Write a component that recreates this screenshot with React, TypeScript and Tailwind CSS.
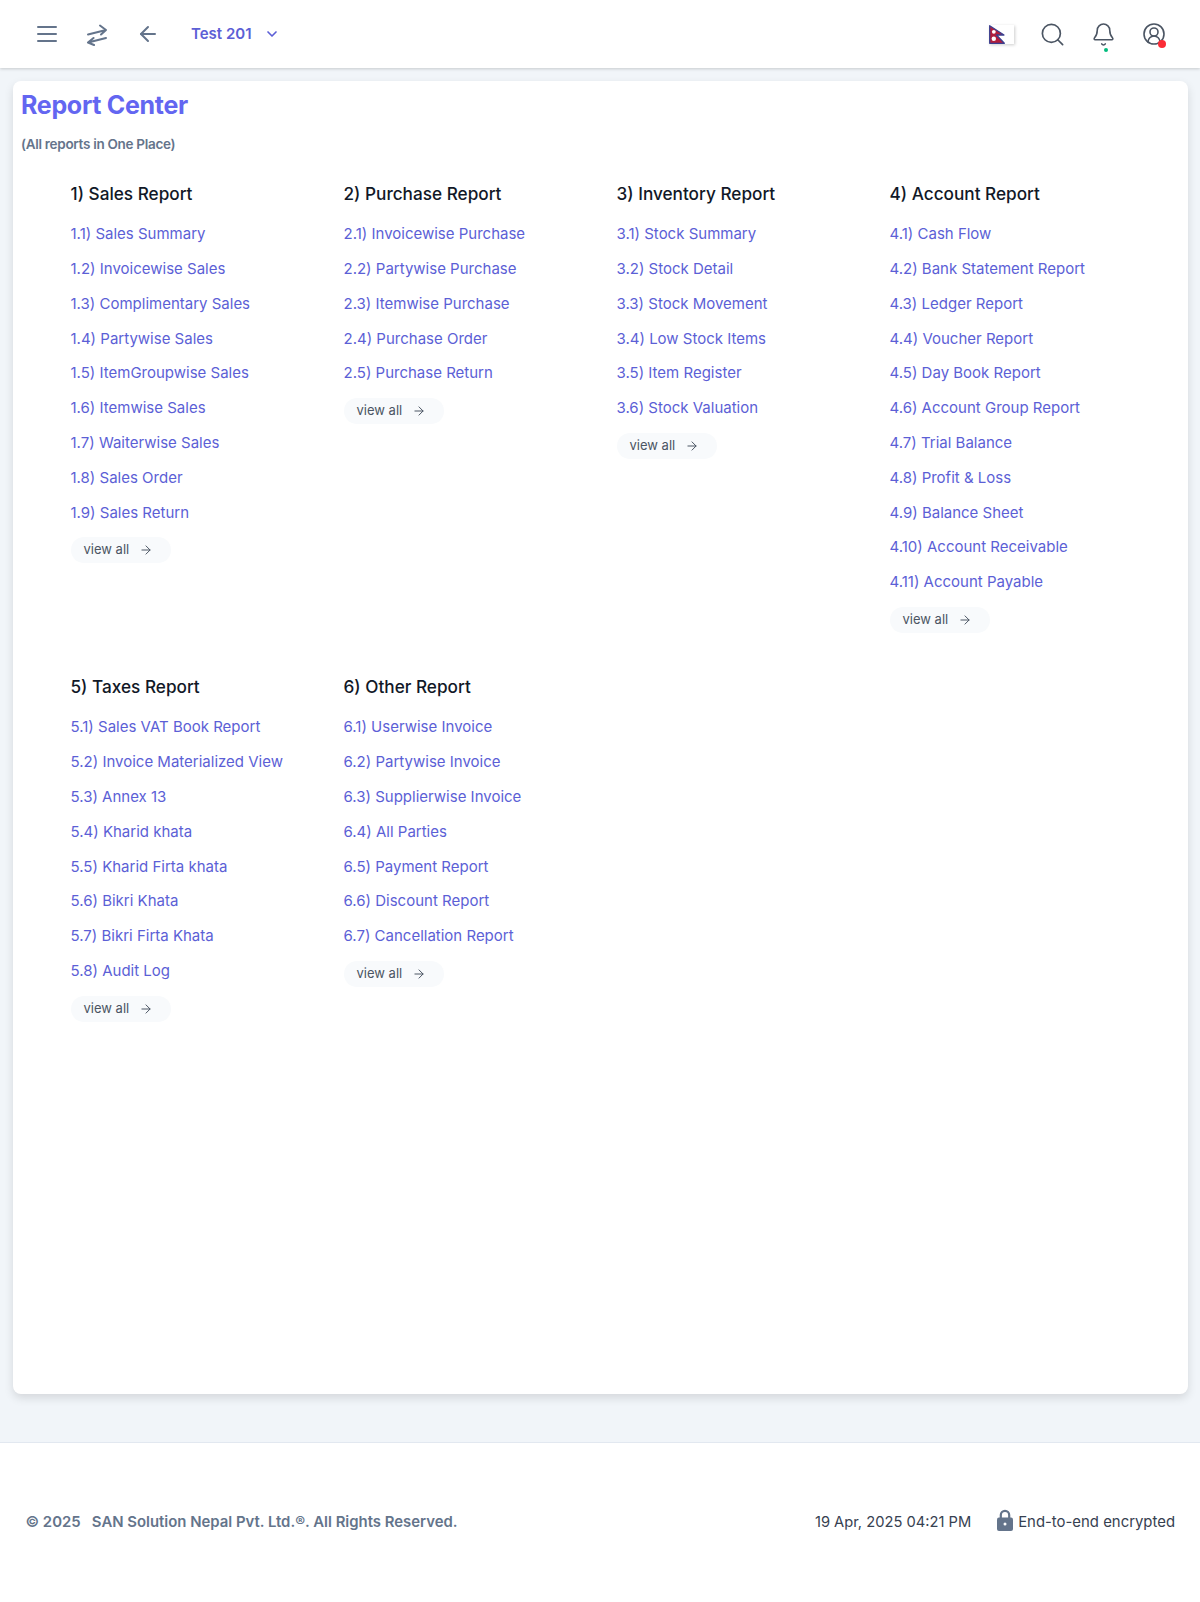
import { AlignJustify, ArrowLeft, ArrowRight, ChevronDown, Bell, Search, CircleUserRound } from "lucide-react";

const sections = [
  {
    title: "1) Sales Report",
    links: ["1.1) Sales Summary", "1.2) Invoicewise Sales", "1.3) Complimentary Sales", "1.4) Partywise Sales", "1.5) ItemGroupwise Sales", "1.6) Itemwise Sales", "1.7) Waiterwise Sales", "1.8) Sales Order", "1.9) Sales Return"],
  },
  {
    title: "2) Purchase Report",
    links: ["2.1) Invoicewise Purchase", "2.2) Partywise Purchase", "2.3) Itemwise Purchase", "2.4) Purchase Order", "2.5) Purchase Return"],
  },
  {
    title: "3) Inventory Report",
    links: ["3.1) Stock Summary", "3.2) Stock Detail", "3.3) Stock Movement", "3.4) Low Stock Items", "3.5) Item Register", "3.6) Stock Valuation"],
  },
  {
    title: "4) Account Report",
    links: ["4.1) Cash Flow", "4.2) Bank Statement Report", "4.3) Ledger Report", "4.4) Voucher Report", "4.5) Day Book Report", "4.6) Account Group Report", "4.7) Trial Balance", "4.8) Profit & Loss", "4.9) Balance Sheet", "4.10) Account Receivable", "4.11) Account Payable"],
  },
  {
    title: "5) Taxes Report",
    links: ["5.1) Sales VAT Book Report", "5.2) Invoice Materialized View", "5.3) Annex 13", "5.4) Kharid khata", "5.5) Kharid Firta khata", "5.6) Bikri Khata", "5.7) Bikri Firta Khata", "5.8) Audit Log"],
  },
  {
    title: "6) Other Report",
    links: ["6.1) Userwise Invoice", "6.2) Partywise Invoice", "6.3) Supplierwise Invoice", "6.4) All Parties", "6.5) Payment Report", "6.6) Discount Report", "6.7) Cancellation Report"],
  },
];

function NepalFlag() {
  return (
    <div className="h-[19px] w-[25px] bg-white shadow-[1px_1px_3px_rgba(0,0,0,0.2)]">
      <svg viewBox="0 0 16 19" className="h-[19px] w-[16px]">
        <path d="M0.7 0.7 L15 10 H7.5 L15.3 18.3 H0.7 Z" fill="#b11e3c" stroke="#3b3f8f" strokeWidth="1.3" strokeLinejoin="round" />
        <circle cx="4.8" cy="6.8" r="1.9" fill="#fff" />
        <circle cx="4.8" cy="13.8" r="2.2" fill="#fff" />
      </svg>
    </div>
  );
}

function Header() {
  return (
    <header className="flex h-[68px] items-center justify-between bg-white pl-[35px] pr-[34px] shadow-[0_1px_3px_rgba(0,0,0,0.18)]">
      <div className="flex items-center text-[#64748b]">
        <AlignJustify size={24} strokeWidth={2} />
        <svg viewBox="0 0 24 24" fill="none" stroke="currentColor" strokeWidth="2" strokeLinecap="round" strokeLinejoin="round" className="ml-[26px] h-6 w-6">
          <path d="M3 12.5 L21 8 M15 3.5 L21 8 L16 12.5" />
          <path d="M21 16 L3 20.5 M8.5 16 L3 20.5 L9 23" />
        </svg>
        <ArrowLeft size={24} strokeWidth={2} className="ml-[27px]" />
        <span className="ml-[31px] text-[15px] font-semibold text-[#5c5fd6]">Test 201</span>
        <ChevronDown size={16} strokeWidth={2.5} className="ml-[12px] text-[#5c5fd6]" />
      </div>
      <div className="flex items-center">
        <NepalFlag />
        <Search size={27} strokeWidth={1.5} className="ml-[25px] text-[#4b5563]" />
        <div className="relative ml-[25px]">
          <Bell size={25} strokeWidth={1.5} className="text-[#4b5563]" />
          <span className="absolute -bottom-[5px] left-[13px] h-1 w-1 rounded-full bg-emerald-500" />
        </div>
        <div className="relative ml-[26px]">
          <CircleUserRound size={24} strokeWidth={1.6} className="text-[#4b5563]" />
          <span className="absolute -bottom-[2px] right-0 h-2 w-2 rounded-full bg-red-500" />
        </div>
      </div>
    </header>
  );
}

function ReportColumn({ title, links }: { title: string; links: string[] }) {
  return (
    <div>
      <h3 className="text-[17.2px] font-[550] leading-[24px] text-[#111827]">{title}</h3>
      <ul className="mt-[11px]">
        {links.map((link) => (
          <li key={link} className="flex h-[34.8px] items-center text-[15px] text-[#5c5fd6]">
            {link}
          </li>
        ))}
      </ul>
      <button className="mt-[7px] flex h-[26px] items-center rounded-full bg-[#f8fafc] pl-[13px] pr-[18px] text-[13px] text-[#4b5563]">
        view all
        <ArrowRight size={14} strokeWidth={1.7} className="ml-[10px]" />
      </button>
    </div>
  );
}

export default function App() {
  return (
    <div className="flex min-h-[1602px] flex-col bg-[#f1f5f9] font-['Inter',sans-serif]">
      <Header />
      <main className="ml-[13px] mr-[12px] mt-[13px] h-[1313px] rounded-lg bg-white pl-[8px] pt-[8px] shadow-[0_4px_10px_rgba(0,0,0,0.12)]">
        <h1 className="text-[25px] font-bold leading-[32px] tracking-[-0.3px] text-[#6366f1]">Report Center</h1>
        <p className="mt-[13px] text-[13.5px] font-semibold leading-[20px] tracking-[-0.3px] text-[#64748b]">(All reports in One Place)</p>
        <div className="mt-[28px] grid grid-cols-[273px_273px_273px_273px] gap-y-[42.5px] pl-[49.5px]">
          {sections.map((section) => (
            <ReportColumn key={section.title} title={section.title} links={section.links} />
          ))}
        </div>
      </main>
      <footer className="mt-[48px] flex h-[160px] items-center justify-between border-t border-[#e2e8f0] bg-white pl-[25.5px] pr-[25px]">
        <p className="text-[14.9px] font-semibold text-[#64748b]">© 2025&nbsp;&nbsp; SAN Solution Nepal Pvt. Ltd.®. All Rights Reserved.</p>
        <div className="flex items-center text-[#374151]">
          <span className="text-[14.7px]">19 Apr, 2025 04:21 PM</span>
          <svg viewBox="0 0 16 22" className="ml-[26px] h-[22px] w-[16px] -translate-y-[2px]">
            <path d="M3.8 10 V6 a4.2 4.2 0 0 1 8.4 0 V10" fill="none" stroke="#64748b" strokeWidth="2.2" />
            <rect x="0" y="8.5" width="16" height="13.5" rx="2" fill="#64748b" />
            <circle cx="8" cy="15" r="1.5" fill="#fff" />
          </svg>
          <span className="ml-[5px] text-[14.9px]">End-to-end encrypted</span>
        </div>
      </footer>
    </div>
  );
}
